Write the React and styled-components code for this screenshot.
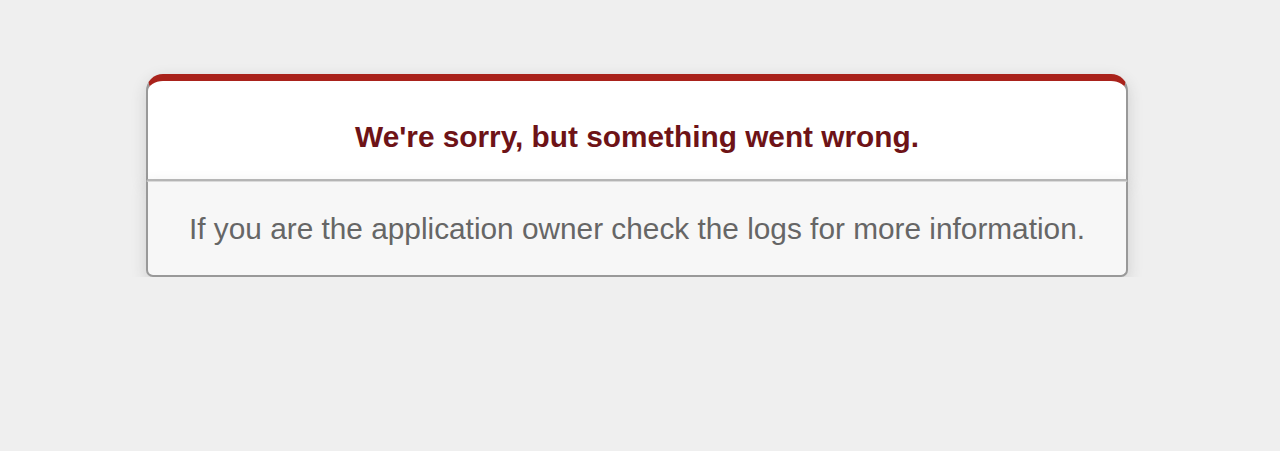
import React from "react";
import styled, { createGlobalStyle } from "styled-components";

const Global = createGlobalStyle`
  html, body {
    margin: 0;
    padding: 0;
    background-color: #efefef;
  }
  body {
    color: #2e2f30;
    text-align: center;
    font-family: "Liberation Sans", Arial, sans-serif;
  }
`;

const Dialog = styled.div`
  width: 982px;
  margin: 74px 0 0 146px;
  box-sizing: border-box;
`;

const Head = styled.div`
  box-sizing: border-box;
  border: 2px solid #cccccc;
  border-left-color: #999999;
  border-right-color: #999999;
  border-bottom-color: #bbbbbb;
  border-top: 7px solid #a9221b;
  border-top-left-radius: 17px;
  border-top-right-radius: 17px;
  background-color: #ffffff;
  padding: 13px 12% 0;
  box-shadow: 0 5px 15px rgba(50, 50, 50, 0.17);
`;

const Title = styled.h1`
  margin: 21px 0 20px;
  font-size: 29.8px;
  line-height: 44px;
  font-weight: bold;
  color: #6e1317;
`;

const Note = styled.p`
  margin: 0;
  padding: 30px 20px 29px;
  background-color: #f7f7f7;
  border: 2px solid #cccccc;
  border-left-color: #999999;
  border-right-color: #999999;
  border-bottom-color: #999999;
  border-top: 1px solid #dadada;
  border-bottom-left-radius: 7px;
  border-bottom-right-radius: 7px;
  color: #666666;
  font-size: 29.8px;
  line-height: 34px;
  box-shadow: 0 5px 15px rgba(50, 50, 50, 0.17);
`;

export default function App() {
  return (
    <>
      <Global />
      <Dialog>
        <Head>
          <Title>We're sorry, but something went wrong.</Title>
        </Head>
        <Note>If you are the application owner check the logs for more information.</Note>
      </Dialog>
    </>
  );
}
